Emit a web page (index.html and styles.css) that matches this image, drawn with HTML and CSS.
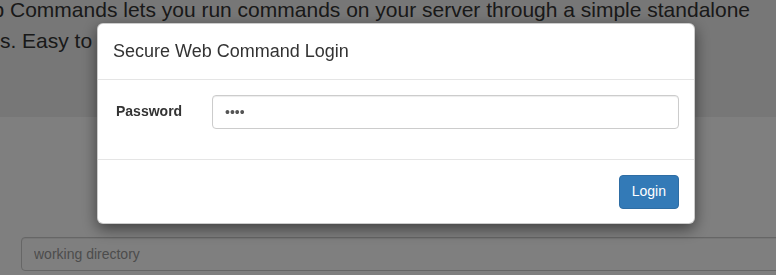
FILE: index.html
```html
<!DOCTYPE html>
<html lang="en">
<head>
    <meta charset="UTF-8">
    <meta name="viewport" content="width=device-width, initial-scale=1.0">
    <title>Secure Web Command</title>
    <link rel="stylesheet" href="styles.css">
</head>
<body>
    <div class="jumbotron">
        <p class="lead">Secure Web Commands lets you run commands on your server through a simple standalone<br>run your jobs. Easy to set up, easy to use.</p>
    </div>

    <div class="workspace">
        <input class="form-control" type="text" placeholder="working directory">
    </div>

    <div class="modal-backdrop"></div>

    <div class="modal">
        <div class="modal-content">
            <div class="modal-header">
                <h4 class="modal-title">Secure Web Command Login</h4>
            </div>
            <div class="modal-body">
                <div class="form-group">
                    <label class="control-label" for="password">Password</label>
                    <input class="form-control" id="password" type="password" value="abcd">
                </div>
            </div>
            <div class="modal-footer">
                <button class="btn btn-primary" type="button">Login</button>
            </div>
        </div>
    </div>
</body>
</html>
```

FILE: styles.css
```css
* {
    box-sizing: border-box;
}
body {
    margin: 0;
    font-family: "Liberation Sans", Arial, sans-serif;
    font-size: 14px;
    line-height: 1.42857;
    color: #333;
    background-color: #fff;
    overflow: hidden;
}
.jumbotron {
    height: 117px;
    background-color: #eee;
    overflow: hidden;
}
.jumbotron .lead {
    margin: -6px 0 0 -111px;
    font-size: 21px;
    line-height: 31px;
    white-space: nowrap;
}
.workspace {
    padding: 120px 0 0 21px;
    width: 900px;
}
.form-control {
    display: block;
    width: 100%;
    height: 34px;
    padding: 6px 12px;
    font-family: inherit;
    font-size: 14px;
    color: #555;
    background-color: #fff;
    border: 1px solid #ccc;
    border-radius: 4px;
    box-shadow: inset 0 1px 1px rgba(0, 0, 0, 0.075);
}
.form-control::placeholder {
    color: #999;
}
.modal-backdrop {
    position: fixed;
    inset: 0;
    background-color: rgba(0, 0, 0, 0.5);
}
.modal {
    position: fixed;
    top: 23px;
    left: 97px;
    width: 598px;
}
.modal-content {
    background-color: #fff;
    border: 1px solid rgba(0, 0, 0, 0.2);
    border-radius: 6px;
    box-shadow: 0 5px 15px rgba(0, 0, 0, 0.5);
}
.modal-header {
    padding: 15px;
    border-bottom: 1px solid #e5e5e5;
}
.modal-title {
    margin: 0;
    font-size: 18px;
    font-weight: normal;
    line-height: 25px;
}
.modal-body {
    padding: 15px;
}
.form-group {
    display: grid;
    grid-template-columns: 69px 1fr;
    column-gap: 27px;
    margin-bottom: 15px;
    padding-left: 3px;
}
.control-label {
    padding-top: 7px;
    font-weight: bold;
}
.modal-footer {
    padding: 15px 15px 14px;
    text-align: right;
    border-top: 1px solid #e5e5e5;
}
.btn {
    display: inline-block;
    padding: 6px 12px;
    font-family: inherit;
    font-size: 14px;
    line-height: 1.42857;
    border: 1px solid transparent;
    border-radius: 4px;
    cursor: pointer;
}
.btn-primary {
    color: #fff;
    background-color: #337ab7;
    border-color: #2e6da4;
}
```
